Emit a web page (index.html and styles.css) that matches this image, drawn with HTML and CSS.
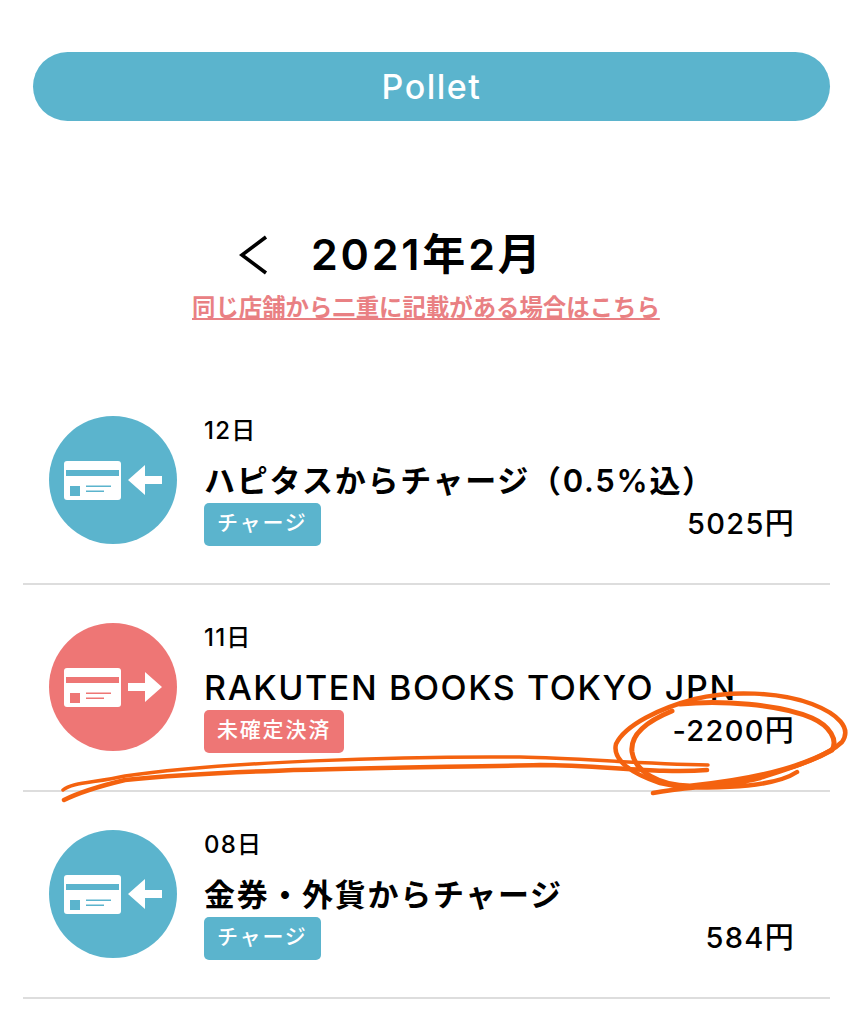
FILE: index.html
```html
<!DOCTYPE html>
<html lang="ja">
<head>
    <meta charset="UTF-8">
    <meta name="viewport" content="width=device-width, initial-scale=1.0">
    <title>Pollet</title>
    <link rel="stylesheet" href="styles.css">
</head>
<body>
    <svg width="0" height="0" class="defs">
        <symbol id="card" viewBox="0 0 57 39">
            <path d="M3 0h51a3 3 0 0 1 3 3v33a3 3 0 0 1-3 3H3a3 3 0 0 1-3-3V3a3 3 0 0 1 3-3z" fill="#fff"/>
            <rect x="2" y="9" width="53" height="6" fill="currentColor"/>
            <rect x="6" y="25" width="10" height="10" fill="currentColor"/>
            <rect x="22" y="24.5" width="25" height="1.5" fill="currentColor"/>
            <rect x="22" y="29.5" width="18" height="1.5" fill="currentColor"/>
        </symbol>
    </svg>

    <header class="app-bar">Pollet</header>

    <div class="month">
        <svg class="back" width="30" height="40" viewBox="0 0 30 40"><path d="M27 2 L3 20 L27 38" fill="none" stroke="#000" stroke-width="3.6"/></svg>
        <h1>2021年2月</h1>
    </div>
    <a class="notice" href="#">同じ店舗から二重に記載がある場合はこちら</a>

    <ul class="list">
        <li class="row">
            <div class="icon blue">
                <svg width="57" height="39"><use href="#card"/></svg>
                <svg class="arrow" width="34" height="30" viewBox="0 0 34 30"><path d="M0 15 L17 0 V11 H34 V19 H17 V30 Z" fill="#fff"/></svg>
            </div>
            <div class="body">
                <div class="date">12日</div>
                <div class="name">ハピタスからチャージ（0.5%込）</div>
                <div class="foot">
                    <span class="tag blue">チャージ</span>
                    <span class="amount">5025円</span>
                </div>
            </div>
        </li>
        <li class="row">
            <div class="icon red">
                <svg width="57" height="39"><use href="#card"/></svg>
                <svg class="arrow" width="34" height="30" viewBox="0 0 34 30"><path d="M34 15 L17 0 V11 H0 V19 H17 V30 Z" fill="#fff"/></svg>
            </div>
            <div class="body">
                <div class="date">11日</div>
                <div class="name latin">RAKUTEN BOOKS TOKYO JPN</div>
                <div class="foot">
                    <span class="tag red">未確定決済</span>
                    <span class="amount">-2200円</span>
                </div>
            </div>
        </li>
        <li class="row">
            <div class="icon blue">
                <svg width="57" height="39"><use href="#card"/></svg>
                <svg class="arrow" width="34" height="30" viewBox="0 0 34 30"><path d="M0 15 L17 0 V11 H34 V19 H17 V30 Z" fill="#fff"/></svg>
            </div>
            <div class="body">
                <div class="date">08日</div>
                <div class="name">金券・外貨からチャージ</div>
                <div class="foot">
                    <span class="tag blue">チャージ</span>
                    <span class="amount">584円</span>
                </div>
            </div>
        </li>
    </ul>

    <!-- hand drawn marker on top of the screenshot -->
    <svg class="scribble" width="853" height="1024" viewBox="0 0 853 1024">
        <g fill="none" stroke="#f4620f" stroke-linecap="round" stroke-linejoin="round">
            <path stroke-width="3.5" d="M63 790 C72 782 95 783 125 776 C220 762 400 756 520 757 C580 758 640 764 708 765"/>
            <path stroke-width="4.5" d="M64 800 C80 792 100 786 125 780 C240 768 420 768 540 765 C600 765 660 774 707 770"/>
            <path stroke-width="4.5" d="M653 793 C690 786 720 788 760 778 C790 768 825 758 842 742 C852 728 838 714 812 704 C780 692 730 690 695 699 C660 708 625 725 616 744 C612 760 632 774 660 783 C690 790 770 790 797 772"/>
            <path stroke-width="5" d="M680 704 C720 700 780 704 812 718 C830 726 838 740 832 750 C800 768 750 780 690 786 C660 786 635 772 632 752 C630 735 645 722 672 711"/>
        </g>
    </svg>
</body>
</html>
```

FILE: styles.css
```css
* {
    margin: 0;
    padding: 0;
    box-sizing: border-box;
}

body {
    position: relative;
    height: 1024px;
    overflow: hidden;
    padding-top: 52px;
    background-color: #fff;
    color: #000;
    font-family: "Inter", "Noto Sans CJK JP", sans-serif;
}

.defs {
    position: absolute;
}

.app-bar {
    height: 69px;
    margin: 0 23px 0 33px;
    border-radius: 35px;
    background-color: #5bb4cd;
    color: #fff;
    font-size: 34px;
    font-weight: 500;
    line-height: 69px;
    letter-spacing: 1.5px;
    text-align: center;
}

.month {
    display: flex;
    align-items: center;
    height: 40px;
    margin-top: 114px;
    padding-left: 239px;
}

.back {
    margin-right: 42px;
}

.month h1 {
    margin-top: -3px;
    font-size: 43px;
    font-weight: 600;
    line-height: 40px;
    letter-spacing: 2.8px;
    white-space: nowrap;
}

.notice {
    display: block;
    width: 468px;
    margin: 18px 0 0 192px;
    color: #e98083;
    font-size: 23.4px;
    font-weight: 700;
    line-height: 30px;
    white-space: nowrap;
}

.list {
    list-style: none;
    margin: 54px 23px 0;
}

.row {
    display: flex;
    height: 207px;
    padding: 38px 0 0 26px;
    border-bottom: 2px solid #ddd;
}

.row:first-child {
    height: 208px;
    padding-top: 39px;
}

.icon {
    display: flex;
    flex: none;
    align-items: center;
    justify-content: center;
    gap: 7px;
    width: 128px;
    height: 128px;
    border-radius: 50%;
    color: #5bb4cd;
}

.icon.blue {
    background-color: #5bb4cd;
}

.icon.red {
    background-color: #ee7675;
    color: #ee7675;
}

.body {
    flex: 1;
    margin-left: 27px;
    padding-right: 35px;
}

.date {
    font-size: 24px;
    font-weight: 500;
    line-height: 30px;
    letter-spacing: 1.2px;
}

.name {
    margin-top: 15px;
    font-size: 31px;
    font-weight: 600;
    line-height: 40px;
    letter-spacing: 1.7px;
    white-space: nowrap;
}

.name.latin {
    font-size: 34px;
    font-weight: 500;
    letter-spacing: 1.6px;
}

.foot {
    display: flex;
    align-items: flex-end;
    justify-content: space-between;
    margin-top: 2px;
}

.tag {
    height: 43px;
    padding: 0 13px;
    border-radius: 5px;
    color: #fff;
    font-size: 21px;
    font-weight: 500;
    line-height: 40px;
    letter-spacing: 1.8px;
}

.tag.blue {
    background-color: #5bb4cd;
}

.tag.red {
    background-color: #ee7675;
}

.amount {
    margin-bottom: 2px;
    font-size: 29px;
    font-weight: 500;
    line-height: 40px;
    letter-spacing: 1.3px;
}

.scribble {
    position: absolute;
    top: 0;
    left: 0;
    pointer-events: none;
}
```
